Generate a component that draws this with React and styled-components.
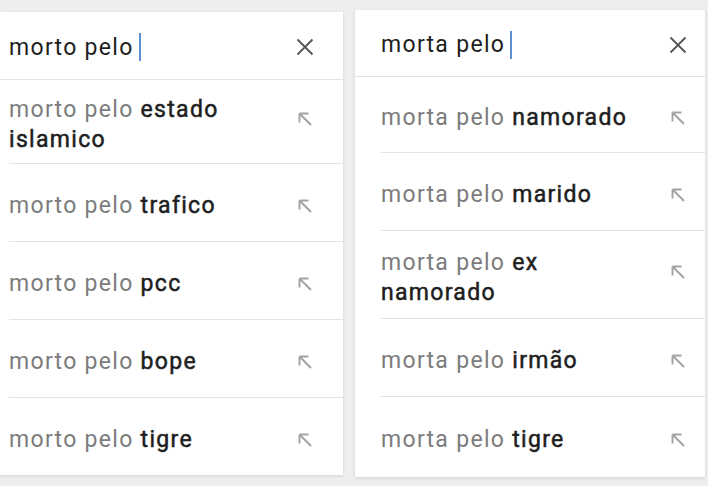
import React from "react";
import styled, { createGlobalStyle } from "styled-components";

const Global = createGlobalStyle`
  html, body {
    margin: 0;
    padding: 0;
    background: #eeeeee;
  }
  body {
    font-family: Roboto, "Noto Sans", "Liberation Sans", sans-serif;
    -webkit-font-smoothing: antialiased;
  }
`;

const Page = styled.div`
  width: 708px;
  height: 486px;
  display: flex;
  align-items: flex-start;
  gap: 12px;
  overflow: hidden;
`;

const Panel = styled.div`
  width: ${({ w }) => w}px;
  margin-top: ${({ top }) => top}px;
  background: #ffffff;
  box-shadow: 0 1px 3px rgba(0, 0, 0, 0.12);
  display: flex;
  flex-direction: column;
`;

const Header = styled.div`
  height: ${({ h }) => h}px;
  display: flex;
  align-items: center;
  padding-top: 3px;
  padding-left: ${({ pad }) => pad}px;
  padding-right: ${({ padR }) => padR}px;
  border-bottom: 1px solid #e2e2e2;
  box-sizing: border-box;
`;

const Query = styled.div`
  flex: 1;
  display: flex;
  align-items: center;
  font-size: 23px;
  letter-spacing: 1.3px;
  color: #1e1e1e;
`;

const Cursor = styled.span`
  display: inline-block;
  width: 2px;
  height: 28px;
  margin-left: 5px;
  background: #5d8fd4;
`;

const IconBox = styled.div`
  width: 20px;
  display: flex;
  justify-content: center;
  transform: translateY(${({ shift }) => shift || 0}px);
`;

const Row = styled.div`
  height: ${({ h }) => h}px;
  display: flex;
  align-items: center;
  padding-top: 6px;
  margin-left: ${({ pad }) => pad}px;
  padding-right: ${({ padR }) => padR}px;
  border-bottom: ${({ last }) => (last ? "none" : "1px solid #e2e2e2")};
  box-sizing: border-box;
`;

const Suggestion = styled.div`
  flex: 1;
  font-size: 23px;
  letter-spacing: 1.3px;
  line-height: 30px;
  padding-right: 10px;
`;

const Prefix = styled.span`
  color: #7c7c7c;
`;

const Completion = styled.span`
  color: #1e1e1e;
  font-weight: 400;
  -webkit-text-stroke: 0.5px #1e1e1e;
`;

const CloseIcon = () => (
  <svg width="18" height="18" viewBox="0 0 18 18">
    <path d="M1.5 1.5 L16.5 16.5 M16.5 1.5 L1.5 16.5" stroke="#555" strokeWidth="1.8" />
  </svg>
);

const FillIcon = () => (
  <svg width="16" height="16" viewBox="0 0 16 16">
    <path
      d="M2.5 2.5 L14 14 M2.5 2.5 L2.5 11.5 M2.5 2.5 L11.5 2.5"
      stroke="#a2a2a2"
      strokeWidth="1.9"
      fill="none"
    />
  </svg>
);

const panels = [
  {
    query: "morto pelo",
    prefix: "morto pelo",
    width: 343,
    top: 12,
    pad: 9,
    padR: 28,
    headerH: 68,
    rows: [
      { text: "estado islamico", h: 84, multi: true },
      { text: "trafico", h: 78 },
      { text: "pcc", h: 78 },
      { text: "bope", h: 78 },
      { text: "tigre", h: 77 },
    ],
  },
  {
    query: "morta pelo",
    prefix: "morta pelo",
    width: 350,
    top: 10,
    pad: 26,
    padR: 17,
    headerH: 67,
    rows: [
      { text: "namorado", h: 76 },
      { text: "marido", h: 78 },
      { text: "ex namorado", h: 88, multi: true },
      { text: "irmão", h: 78 },
      { text: "tigre", h: 80 },
    ],
  },
];

const SearchPanel = ({ data }) => (
  <Panel w={data.width} top={data.top}>
    <Header h={data.headerH} pad={data.pad} padR={data.padR}>
      <Query>
        {data.query}
        <Cursor />
      </Query>
      <IconBox>
        <CloseIcon />
      </IconBox>
    </Header>
    {data.rows.map((r, i) => (
      <Row
        key={r.text}
        h={r.h}
        pad={data.pad}
        padR={data.padR}
        last={i === data.rows.length - 1}
      >
        <Suggestion>
          <Prefix>{data.prefix} </Prefix>
          <Completion>{r.text}</Completion>
        </Suggestion>
        <IconBox shift={r.multi ? -6 : 0}>
          <FillIcon />
        </IconBox>
      </Row>
    ))}
  </Panel>
);

export default function App() {
  return (
    <Page>
      <Global />
      {panels.map((p) => (
        <SearchPanel key={p.query} data={p} />
      ))}
    </Page>
  );
}
